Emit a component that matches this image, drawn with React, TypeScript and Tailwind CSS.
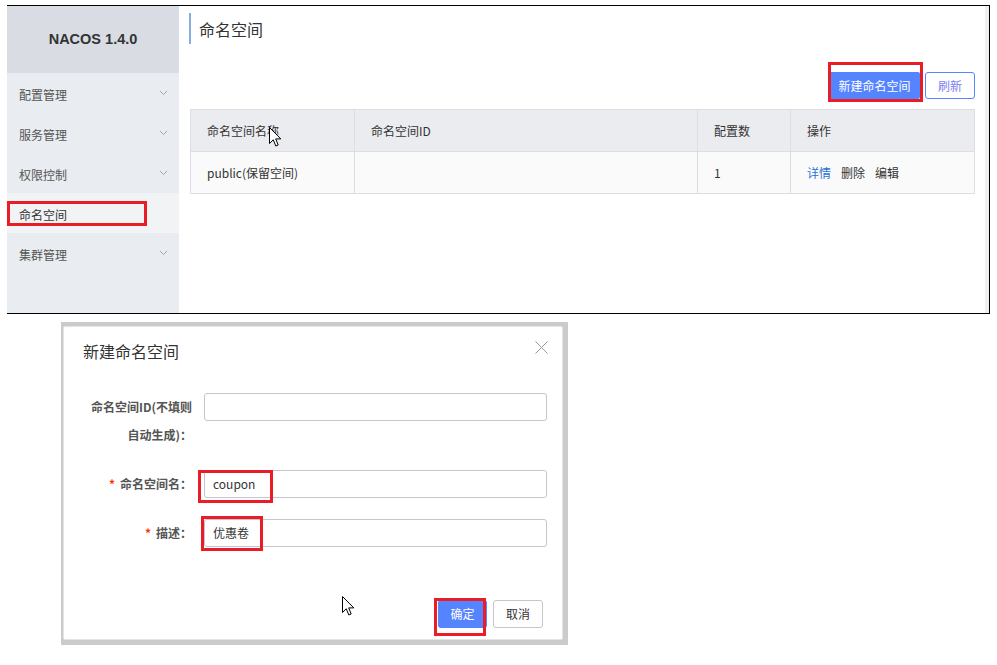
import React from "react";

const CJK = { fontFamily: "'Noto Sans CJK SC', 'Noto Sans', sans-serif" };

function Chevron() {
  return (
    <svg width="9" height="6" viewBox="0 0 9 6" className="shrink-0">
      <path d="M1 1 L4.5 4.5 L8 1" fill="none" stroke="#a0a4ad" strokeWidth="1" />
    </svg>
  );
}

function Cursor({ className }: { className: string }) {
  return (
    <svg width="13" height="21" viewBox="0 0 13 21" className={className}>
      <path
        d="M0.5 0.5 L0.5 16.5 L4.3 12.8 L6.8 19 L9.2 18 L6.7 11.9 L11.8 11.9 Z"
        fill="#fff"
        stroke="#000"
        strokeWidth="1"
        strokeLinejoin="miter"
      />
    </svg>
  );
}

function RedBox({ className }: { className: string }) {
  return <div className={"absolute border-[3px] border-[#ea1d27] pointer-events-none " + className} />;
}

const menu = [
  { label: "配置管理", chevron: true },
  { label: "服务管理", chevron: true },
  { label: "权限控制", chevron: true },
  { label: "命名空间", chevron: false, active: true },
  { label: "集群管理", chevron: true },
];

export default function App() {
  return (
    <div className="w-[997px] h-[665px] bg-white relative overflow-hidden text-[12px] text-[#333]" style={CJK}>
      {/* Top screenshot */}
      <div className="ml-[7px] mt-[5px] w-[983px] h-[309px] border-t border-b border-r border-black flex">
        {/* Sidebar */}
        <div className="w-[172px] bg-[#e9ecf0] flex flex-col">
          <div
            className="h-[67px] bg-[#d9dde3] flex items-center justify-center font-bold text-[14.5px] text-[#333]"
            style={{ fontFamily: "'Liberation Sans', Arial, sans-serif" }}
          >
            NACOS 1.4.0
          </div>
          {menu.map((m) => (
            <div
              key={m.label}
              className={
                "h-[40px] flex items-center justify-between pl-[12px] pr-[11px] relative " +
                (m.active ? "bg-[#f2f3f5] text-[#333]" : "text-[#555]")
              }
            >
              <span className="pt-[3px]">{m.label}</span>
              {m.chevron && <Chevron />}
              {m.active && <RedBox className="left-0 top-[8px] w-[140px] h-[25px]" />}
            </div>
          ))}
        </div>

        {/* Main */}
        <div className="flex-1 flex">
          <div className="flex-1 pl-[10px] pr-[10px] pt-[7px]">
            <div className="h-[31px] border-l-2 border-[#88aedf] pl-[8px] flex items-center text-[16px] text-[#333]">
              命名空间
            </div>
            <div className="mt-[28px] flex justify-end gap-[5px]">
              <div className="relative">
                <button className="h-[27px] w-[91px] bg-[#5584ff] text-white text-[12px] rounded-[2px] flex items-center justify-center">
                  新建命名空间
                </button>
                <RedBox className="-left-[1px] -top-[10px] w-[95px] h-[40px]" />
              </div>
              <button className="h-[27px] w-[50px] bg-white border border-[#5584ff] text-[#7c80f0] text-[12px] rounded-[3px] flex items-center justify-center">
                刷新
              </button>
            </div>
            <div className="mt-[10px] ml-[1px] border border-[#dcdee3] relative">
              <div className="grid grid-cols-[164px_343px_93px_1fr] bg-[#ebecf0] h-[42px] border-b border-[#dcdee3]">
                <div className="pl-[16px] flex items-center border-r border-[#dcdee3]">命名空间名称</div>
                <div className="pl-[16px] flex items-center border-r border-[#dcdee3]">命名空间ID</div>
                <div className="pl-[16px] flex items-center border-r border-[#dcdee3]">配置数</div>
                <div className="pl-[16px] flex items-center">操作</div>
              </div>
              <div className="grid grid-cols-[164px_343px_93px_1fr] bg-[#fafafa] h-[41px]">
                <div className="pl-[16px] flex items-center border-r border-[#dcdee3]">public(保留空间)</div>
                <div className="pl-[16px] flex items-center border-r border-[#dcdee3]"></div>
                <div className="pl-[16px] flex items-center border-r border-[#dcdee3]">1</div>
                <div className="pl-[16px] flex items-center gap-[10px]">
                  <span className="text-[#2b6fd8]">详情</span>
                  <span>删除</span>
                  <span>编辑</span>
                </div>
              </div>
              <Cursor className="absolute left-[78px] top-[17px]" />
            </div>
          </div>
          <div className="w-[4px] bg-[#f0f0f0]" />
        </div>
      </div>

      {/* Dialog screenshot */}
      <div className="ml-[61px] mt-[8px] w-[507px] h-[323px] bg-[#cbcbcb] pt-[4px] pl-[2px] pr-[5px] pb-[5px]">
        <div className="h-full bg-white border border-[#e3e4e8] rounded-[2px] relative flex flex-col">
          <div className="pl-[19px] pt-[13px] h-[35px] text-[16px] leading-[22px] text-[#333]">新建命名空间</div>
          <svg width="13" height="13" viewBox="0 0 13 13" className="absolute top-[14px] right-[14px]">
            <path d="M0.5 0.5 L12.5 12.5 M12.5 0.5 L0.5 12.5" stroke="#9a9a9a" strokeWidth="1" />
          </svg>

          <div className="mt-[31px] flex flex-col gap-[21px]">
            <div className="flex items-start">
              <div className="ml-[19px] w-[109px] text-right font-bold text-[#555] leading-[28px]">
                命名空间ID(不填则自动生成)：
              </div>
              <div className="ml-[12px] mr-[15px] flex-1 h-[28px] border border-[#c4c6cf] rounded-[3px]" />
            </div>
            <div className="flex items-start">
              <div className="ml-[19px] w-[109px] text-right font-bold text-[#555] leading-[28px]">
                <span className="text-[#ff3000] mr-[5px]">*</span>命名空间名：
              </div>
              <div className="ml-[12px] mr-[15px] flex-1 h-[28px] border border-[#c4c6cf] rounded-[3px] relative flex items-center pl-[8px]">
                coupon
                <RedBox className="-left-[7px] -top-[1px] w-[75px] h-[33px]" />
              </div>
            </div>
            <div className="flex items-start">
              <div className="ml-[19px] w-[109px] text-right font-bold text-[#555] leading-[28px]">
                <span className="text-[#ff3000] mr-[5px]">*</span>描述：
              </div>
              <div className="ml-[12px] mr-[15px] flex-1 h-[28px] border border-[#c4c6cf] rounded-[3px] relative flex items-center pl-[8px]">
                优惠卷
                <RedBox className="-left-[4px] -top-[4px] w-[62px] h-[35px]" />
              </div>
            </div>
          </div>

          <div className="mt-auto pb-[11px] pr-[19px] flex justify-end gap-[6px]">
            <div className="relative">
              <button className="h-[28px] w-[49px] bg-[#5584ff] text-white rounded-[3px] flex items-center justify-center">
                确定
              </button>
              <RedBox className="-left-[4px] -top-[2px] w-[52px] h-[38px]" />
            </div>
            <button className="h-[28px] w-[50px] bg-white border border-[#c4c6cf] text-[#333] rounded-[3px] flex items-center justify-center">
              取消
            </button>
          </div>
          <Cursor className="absolute left-[278px] top-[269px]" />
        </div>
      </div>
    </div>
  );
}
